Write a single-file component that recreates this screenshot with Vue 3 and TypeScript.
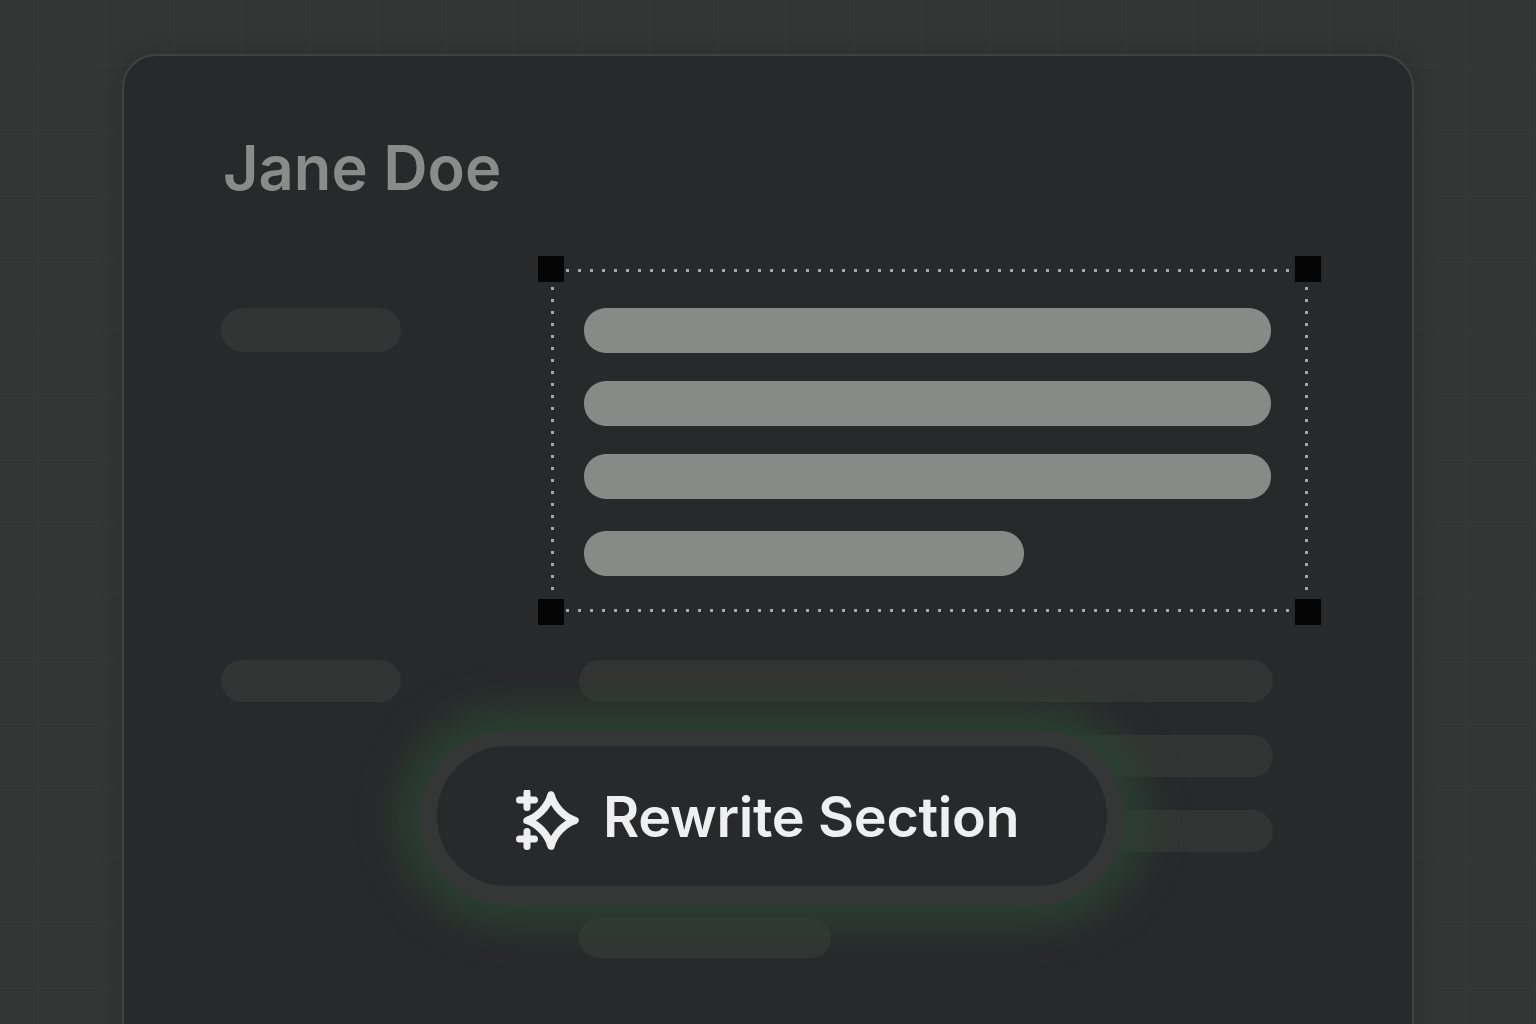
<script setup lang="ts">
const selectedBars: string[] = ['bar', 'bar', 'bar third', 'bar short']
const lowerLines: string[] = ['line', 'line', 'line', 'line tail']
</script>

<template>
  <div class="page">
    <section class="card">
      <h1 class="name">Jane Doe</h1>

      <div class="row first">
        <div class="label"></div>
        <div class="selection">
          <span class="handle tl"></span>
          <span class="handle tr"></span>
          <span class="handle bl"></span>
          <span class="handle br"></span>
          <div v-for="(cls, i) in selectedBars" :key="i" :class="cls"></div>
        </div>
      </div>

      <div class="row second">
        <div class="label small"></div>
        <div class="lines">
          <div v-for="(cls, i) in lowerLines" :key="i" :class="cls"></div>
        </div>
      </div>

      <button class="rewrite" type="button">
        <svg class="spark" width="64" height="62" viewBox="0 0 64 62" fill="none" stroke="#efefef" stroke-linecap="round" stroke-linejoin="round">
          <path stroke-width="7.5" d="M35 5C38 17 49 27.5 59 30.5C49 33.5 38 44 35 56C32 44 21 33.5 11 30.5C21 27.5 32 17 35 5Z" />
          <path stroke-width="7" d="M11 2.5V17.5M3.5 10H18.5M11 41.5V56.5M3.5 49H18.5" />
        </svg>
        <span class="rewrite-text">Rewrite Section</span>
      </button>
    </section>
  </div>
</template>

<style scoped>
.page {
  width: 1536px;
  height: 1024px;
  overflow: hidden;
  box-sizing: border-box;
  padding: 54px 122px 0;
  background-color: #343635;
  background-image:
    linear-gradient(90deg, rgba(255, 255, 255, 0.018) 1px, transparent 1px),
    linear-gradient(rgba(255, 255, 255, 0.018) 1px, transparent 1px);
  background-size: 68px 66px;
  background-position: 37px 64px;
}
.card {
  position: relative;
  box-sizing: border-box;
  width: 1292px;
  height: 1040px;
  background: #28292b;
  border: 2px solid #404341;
  border-radius: 34px;
  padding: 72px 0 0 97px;
  box-shadow: 0 0 22px rgba(30, 32, 31, 0.3);
}
.name {
  margin: 0 0 0 2px;
  font: 600 61.4px/80px Inter, "Liberation Sans", sans-serif;
  color: #8a8c8a;
}
.row {
  display: flex;
  align-items: flex-start;
}
.first {
  margin-top: 61px;
}
.second {
  margin-top: 48px;
}
.label {
  width: 180px;
  height: 44px;
  margin-top: 39px;
  border-radius: 22px;
  background: #333534;
}
.label.small {
  height: 42px;
  margin-top: 0;
}
.selection {
  --dot: #a6a8a6;
  position: relative;
  box-sizing: border-box;
  width: 757px;
  height: 343px;
  margin-left: 150px;
  padding: 39px 37px 0 33px;
  background:
    repeating-linear-gradient(90deg, transparent 0 3px, var(--dot) 3px 6px, transparent 6px 12px) top / 100% 3px no-repeat,
    repeating-linear-gradient(90deg, transparent 0 3px, var(--dot) 3px 6px, transparent 6px 12px) bottom / 100% 3px no-repeat,
    repeating-linear-gradient(180deg, transparent 0 6px, var(--dot) 6px 9px, transparent 9px 12px) left / 3px 100% no-repeat,
    repeating-linear-gradient(180deg, transparent 0 6px, var(--dot) 6px 9px, transparent 9px 12px) right / 3px 100% no-repeat;
}
.handle {
  position: absolute;
  width: 26px;
  height: 26px;
  background: #050505;
}
.tl { left: -13px; top: -13px; }
.tr { right: -13px; top: -13px; }
.bl { left: -13px; bottom: -13px; }
.br { right: -13px; bottom: -13px; }
.bar {
  height: 45px;
  margin-bottom: 28px;
  border-radius: 22px;
  background: #888a88;
}
.bar.third {
  margin-bottom: 32px;
}
.bar.short {
  width: 440px;
  margin-bottom: 0;
}
.lines {
  display: flex;
  flex-direction: column;
  width: 694px;
  margin-left: 178px;
}
.line {
  height: 42px;
  margin-bottom: 33px;
  border-radius: 21px;
  background: #333534;
}
.line.tail {
  width: 252px;
  height: 40px;
  margin-top: 33px;
  margin-bottom: 0;
  border-radius: 20px;
}
.rewrite {
  position: absolute;
  left: 313px;
  top: 690px;
  display: flex;
  align-items: center;
  box-sizing: border-box;
  width: 670px;
  height: 140px;
  padding: 2px 0 0 79px;
  gap: 23px;
  border: 0;
  border-radius: 70px;
  background: #28292b;
  box-shadow:
    0 2px 0 17px #353736,
    0 1px 36px 42px rgba(42, 64, 50, 0.9);
}
.spark {
  flex: none;
  margin-top: 8px;
}
.rewrite-text {
  font: 600 55.7px/1 Inter, "Liberation Sans", sans-serif;
  letter-spacing: -0.35px;
  color: #efefef;
  white-space: nowrap;
}
</style>

<style>
html, body {
  margin: 0;
  background: #343635;
}
</style>
